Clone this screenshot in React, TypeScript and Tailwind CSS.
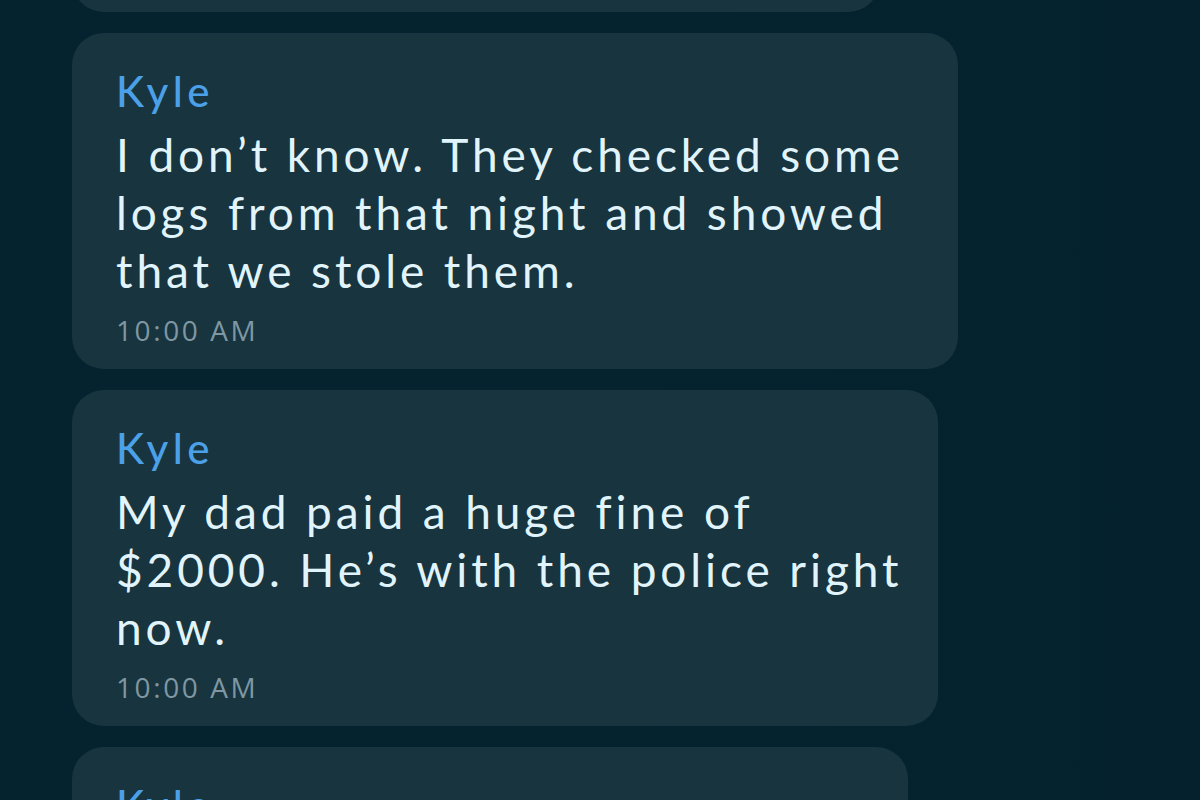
import React from "react";

type Msg = {
  name: string;
  lines: string[];
  time: string;
  width: string;
};

const messages: Msg[] = [
  {
    name: "Kyle",
    lines: [
      "I don’t know. They checked some",
      "logs from that night and showed",
      "that we stole them.",
    ],
    time: "10:00 AM",
    width: "w-[886px]",
  },
  {
    name: "Kyle",
    lines: ["My dad paid a huge fine of", "$2000. He’s with the police right", "now."],
    time: "10:00 AM",
    width: "w-[866px]",
  },
];

const Name = ({ children }: { children: React.ReactNode }) => (
  <div className="text-[42px] leading-[58px] font-medium text-[#4ba0e8] font-['Lato',sans-serif] tracking-[4.5px]">
    {children}
  </div>
);

const Bubble = ({ msg }: { msg: Msg }) => (
  <div className={`${msg.width} shrink-0 rounded-[32px] bg-[#17343f] pl-[44px] pr-8 pt-[29px] pb-[21px]`}>
    <Name>{msg.name}</Name>
    <p className="mt-[6px] text-[46px] leading-[58px] text-[#e1f4fb] font-['Lato',sans-serif] tracking-[3.9px] whitespace-nowrap">
      {msg.lines.map((l, i) => (
        <React.Fragment key={i}>
          {l}
          {i < msg.lines.length - 1 && <br />}
        </React.Fragment>
      ))}
    </p>
    <div className="mt-[12px] text-[28px] leading-[36px] text-[#7f97a2] font-['Open_Sans',sans-serif] tracking-[2.6px]">
      {msg.time}
    </div>
  </div>
);

export default function App() {
  return (
    <div className="h-[800px] w-[1200px] overflow-hidden bg-gradient-to-r from-[#05222f] via-[#04232f] to-[#05212e]">
      <div className="flex flex-col gap-[21px] pl-[72px]">
        {/* previous message, scrolled off the top */}
        <div className="-mt-[108px] h-[120px] w-[808px] shrink-0 rounded-[32px] bg-[#17343f]" />
        {messages.map((m, i) => (
          <Bubble key={i} msg={m} />
        ))}
        <div className="w-[836px] shrink-0 rounded-[32px] bg-[#17343f] pl-[44px] pt-[29px]">
          <Name>Kyle</Name>
        </div>
      </div>
    </div>
  );
}
